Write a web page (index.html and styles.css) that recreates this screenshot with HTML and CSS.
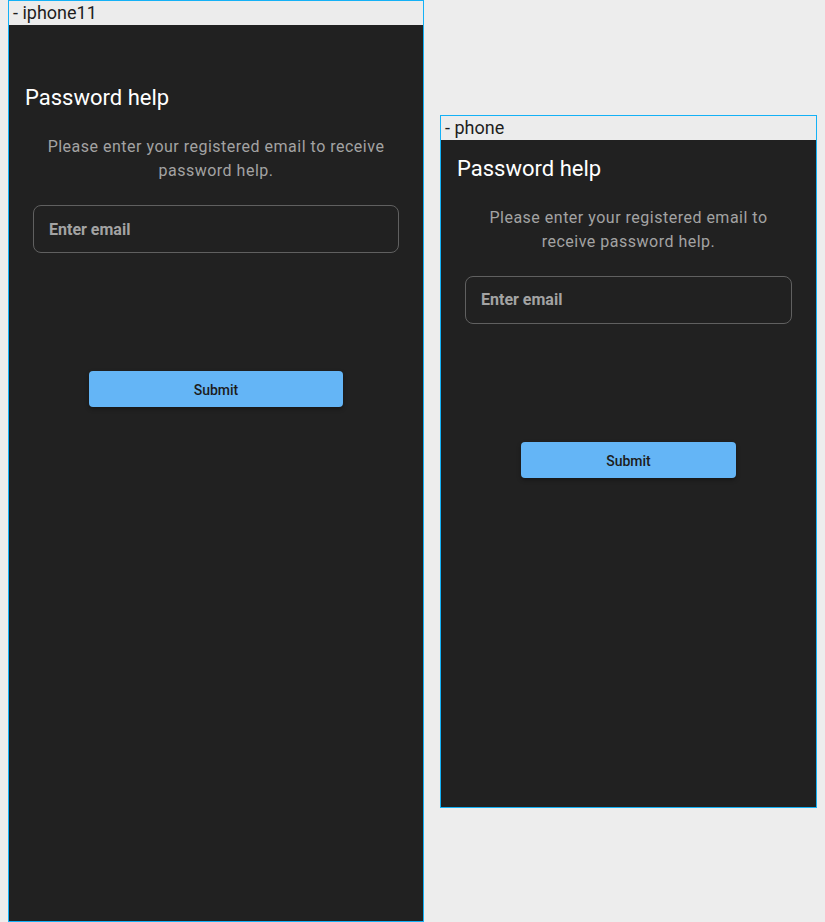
FILE: index.html
```html
<!DOCTYPE html>
<html>
<head>
    <title>Password help</title>
    <link rel="stylesheet" href="styles.css">
</head>
<body>
    <div class="device">
        <div class="device-label">- iphone11</div>
        <div class="screen screen-iphone11">
            <form class="help-form">
                <h2>Password help</h2>
                <p class="hint">Please enter your registered email to receive password help.</p>
                <input type="email" class="email" placeholder="Enter email">
                <button type="button">Submit</button>
            </form>
        </div>
    </div>

    <div class="device">
        <div class="device-label">- phone</div>
        <div class="screen screen-phone">
            <form class="help-form">
                <h2>Password help</h2>
                <p class="hint">Please enter your registered email to receive password help.</p>
                <input type="email" class="email" placeholder="Enter email">
                <button type="button">Submit</button>
            </form>
        </div>
    </div>
</body>
</html>
```

FILE: styles.css
```css
body {
    margin: 0 8px;
    background-color: #ededed;
    font-family: Roboto, "Liberation Sans", sans-serif;
    display: flex;
    align-items: center;
    gap: 16px;
    min-height: 922px;
}
.device {
    border: 1px solid #14b1f6;
    background-color: #212121;
}
.device-label {
    height: 24px;
    line-height: 24px;
    padding-left: 4px;
    font-size: 18px;
    color: #1e1e1e;
    background-color: #ececec;
}
.screen {
    box-sizing: border-box;
    padding: 17px 16px 0;
}
.screen-iphone11 {
    width: 414px;
    height: 896px;
    padding-top: 61px;
}
.screen-phone {
    width: 375px;
    height: 667px;
}
.help-form {
    display: flex;
    flex-direction: column;
}
h2 {
    margin: 0;
    font-size: 22px;
    font-weight: 400;
    line-height: 24px;
    color: #fff;
}
.hint {
    margin: 25px 16px 0;
    font-size: 16px;
    line-height: 24px;
    letter-spacing: 0.5px;
    text-align: center;
    color: #a3a3a3;
}
.email {
    margin: 22px 8px 0;
    height: 48px;
    box-sizing: border-box;
    padding: 0 15px;
    border: 1px solid #606060;
    border-radius: 8px;
    background: transparent;
    font-family: inherit;
    font-size: 16px;
    font-weight: 700;
    color: #e0e0e0;
    outline: none;
}
.email::placeholder {
    color: #a3a3a3;
}
button {
    margin: 118px 64px 0;
    height: 36px;
    padding-top: 3px;
    border: none;
    border-radius: 4px;
    background-color: #64b5f6;
    color: #1c1c1c;
    font-family: inherit;
    font-size: 14px;
    font-weight: 500;
    box-shadow: 0 2px 4px rgba(0, 0, 0, 0.35);
    cursor: pointer;
}
```
